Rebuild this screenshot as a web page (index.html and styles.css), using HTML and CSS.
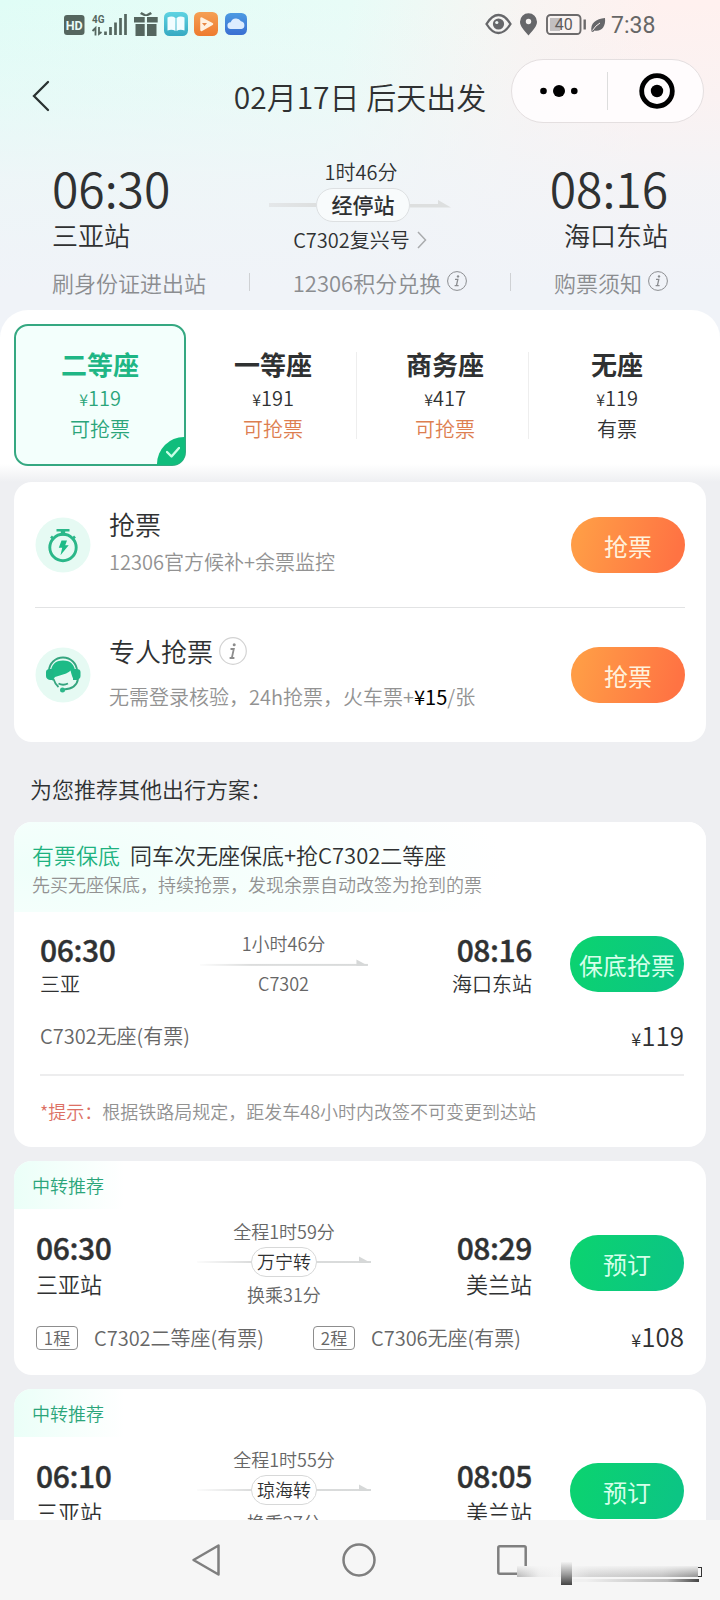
FILE: index.html
```html
<!DOCTYPE html>
<html lang="zh-CN">
<head>
<meta charset="utf-8">
<title>车次详情</title>
<link rel="stylesheet" href="styles.css">
</head>
<body>
<svg class="defs" width="0" height="0">
  <symbol id="arrow" viewBox="0 0 174 12">
    <rect x="0" y="8" width="174" height="2" fill="url(#fade)"/>
    <path d="M162 3.500l12 6.500h-12z" fill="#d6d8d8"/>
  </symbol>
  <symbol id="info" viewBox="0 0 20 20">
    <circle cx="10" cy="10" r="9.4" fill="none" stroke="currentColor" stroke-width="1"/>
    <circle cx="11" cy="5.4" r="1.2" fill="currentColor"/>
    <path d="M8 8.4h2.8L9.4 14.6h2.2M7.6 14.6h2" fill="none" stroke="currentColor" stroke-width="1.3"/>
  </symbol>
  <linearGradient id="fade" gradientUnits="userSpaceOnUse" x1="0" y1="0" x2="174" y2="0"><stop offset="0" stop-color="#dcdddd" stop-opacity="0.1"/><stop offset=".3" stop-color="#dcdddd"/><stop offset="1" stop-color="#d8dada"/></linearGradient>
</svg>
<div class="screen">
  <header class="header">
    <div class="status">
      <svg width="184" height="26" viewBox="64 11 184 26">
        <defs>
          <linearGradient id="gb" x1="0" y1="0" x2="0" y2="1"><stop offset="0" stop-color="#5fd3e2"/><stop offset="1" stop-color="#35a9c2"/></linearGradient>
          <linearGradient id="go" x1="0" y1="0" x2="0" y2="1"><stop offset="0" stop-color="#f5a055"/><stop offset="1" stop-color="#ee7a2e"/></linearGradient>
          <linearGradient id="gc" x1="0" y1="0" x2="0" y2="1"><stop offset="0" stop-color="#4d9ae2"/><stop offset="1" stop-color="#3a6fd2"/></linearGradient>
        </defs>
        <rect x="64" y="15" width="20.500" height="20" rx="3" fill="#55665f"/>
        <text x="74.200" y="29.800" class="st-hd" text-anchor="middle" textLength="17" lengthAdjust="spacingAndGlyphs">HD</text>
        <text x="92" y="22.600" class="st-4g" textLength="12.500" lengthAdjust="spacingAndGlyphs">4G</text>
        <path d="M92.500 31l3-3v7.500M101.500 32l-2.500 2v-7" fill="none" stroke="#55665f" stroke-width="1.800"/>
        <path d="M105.500 31.500v3.500M110.500 27v8M115.500 22.500v12.500M120.500 18v17M125.500 14v21" stroke="#55665f" stroke-width="2.700"/>
        <path d="M134 17h10.700v5.500H134zM147 17h10.700v5.500H147zM135.500 24h9.200v12h-9.200zM147 24h9.500v12H147zM140 14l1.500-2 4.500 2.500 4.500-2.500 1.500 2-4 2h-4z" fill="#55665f"/>
        <rect x="164" y="12" width="24" height="24" rx="5.500" fill="url(#gb)"/>
        <path d="M167.500 17.500q4.500-2 8 .5v13q-3.500-2-8-.5zM184.500 17.500q-4.500-2-8 .5v13q3.500-2 8-.5z" fill="#f2fdff"/>
        <rect x="194" y="12" width="24" height="24" rx="5.500" fill="url(#go)"/>
        <path d="M201.500 18.500l10.500 5.500-10.500 6z" fill="#fff1df" stroke="#fff1df" stroke-width="2.500" stroke-linejoin="round"/>
        <path d="M202 23h5l-2.500 3z" fill="#e88845"/>
        <rect x="225" y="13" width="22" height="22" rx="5.500" fill="url(#gc)"/>
        <path d="M231 29a3.400 3.400 0 0 1-.3-6.800 5.800 5.800 0 0 1 10.300-1 4 4 0 0 1 .5 7.800z" fill="#dcecff"/>
      </svg>
      <svg width="171" height="26" viewBox="485 11 171 26">
        <path d="M486.500 24q5.500-9 12-9t12 9q-5.500 9-12 9t-12-9z" fill="none" stroke="#66676a" stroke-width="2.300"/>
        <circle cx="498.500" cy="24" r="5.600" fill="#66676a"/><circle cx="496.800" cy="22.500" r="1.600" fill="#eef6f4"/>
        <path d="M528.500 35.500c-4.500-5.500-8.500-9-8.500-13.700a8.500 8.500 0 0 1 17 0c0 4.700-4 8.200-8.500 13.700z" fill="#66676a"/><circle cx="528.500" cy="21.500" r="2.700" fill="#f5f3f2"/>
        <rect x="547" y="15" width="33.500" height="19" rx="3.500" fill="none" stroke="#6c6a6b" stroke-width="1.900"/>
        <rect x="550" y="18" width="10" height="13" fill="#c2bfc0"/>
        <text x="563.800" y="30.300" class="st-bat" text-anchor="middle">40</text>
        <path d="M584.700 19.500v10" stroke="#6c6a6b" stroke-width="2.400"/>
        <path d="M591.500 31.500c-1.500-8 4.500-13 13.500-13.500 1 8.500-3.500 14-10.500 12.500l-1.500 1.500z" fill="#66676a"/>
        <path d="M592.500 30.500q3-5 7.500-7.500" fill="none" stroke="#fdf2f0" stroke-width="1"/>
        <text x="611" y="32.500" class="st-time">7:38</text>
      </svg>
    </div>
    <div class="nav">
      <svg class="back" width="18" height="32" viewBox="0 0 18 32"><path d="M16 2L2 16l14 14" fill="none" stroke="#2a3231" stroke-width="2.300" stroke-linecap="round"/></svg>
      <h1 class="nav-title">02月17日 后天出发</h1>
      <div class="capsule">
        <svg width="38" height="14" viewBox="0 0 38 14"><circle cx="3.500" cy="7" r="3.300"/><circle cx="19" cy="7" r="6"/><circle cx="34.300" cy="7" r="3.300"/></svg>
        <i class="capsule-line"></i>
        <svg width="36" height="36" viewBox="0 0 36 36"><circle cx="18" cy="18" r="15.300" fill="none" stroke="#000" stroke-width="4.800"/><circle cx="18" cy="18" r="6.200"/></svg>
      </div>
    </div>
    <div class="route">
      <div class="route-end"><div class="big-time">06:30</div><div class="big-stn">三亚站</div></div>
      <div class="route-mid">
        <div class="mid-text">1时46分</div>
        <div class="stops-row">
          <i class="stops-line"></i><span class="stops">经停站</span>
          <svg width="42" height="12" viewBox="0 0 42 12"><path d="M0 5h28V1l13 7.500H0z" fill="#dddfdf"/></svg>
        </div>
        <div class="mid-text train">C7302复兴号<svg width="10" height="18" viewBox="0 0 10 18"><path d="M1 1l7.500 8L1 17" fill="none" stroke="#a9abad" stroke-width="1.500"/></svg></div>
      </div>
      <div class="route-end right"><div class="big-time">08:16</div><div class="big-stn">海口东站</div></div>
    </div>
    <div class="tips">
      <span>刷身份证进出站</span><i></i>
      <span class="tip">12306积分兑换<svg width="20" height="20"><use href="#info"/></svg></span><i></i>
      <span class="tip">购票须知<svg width="20" height="20"><use href="#info"/></svg></span>
    </div>
  </header>

  <section class="seats">
    <div class="seat active"><b>二等座</b><p><small>¥</small>119</p><em>可抢票</em>
      <span class="check"><svg width="14" height="11" viewBox="0 0 14 11"><path d="M1 5l4.500 4.500L13 1" fill="none" stroke="#c9ffe6" stroke-width="2.400" stroke-linecap="round" stroke-linejoin="round"/></svg></span></div>
    <div class="seat line"><b>一等座</b><p><small>¥</small>191</p><em class="orange">可抢票</em></div>
    <div class="seat line"><b>商务座</b><p><small>¥</small>417</p><em class="orange">可抢票</em></div>
    <div class="seat"><b>无座</b><p><small>¥</small>119</p><em>有票</em></div>
  </section>

  <section class="card grab">
    <div class="grab-row">
      <svg class="grab-icon" width="56" height="56" viewBox="0 0 56 56">
        <circle cx="28" cy="28" r="27.500" fill="#e6faf3"/>
        <path d="M21.500 12h13v2.500h-4.300v4h-4.400v-4h-4.300z" fill="#2bb789"/>
        <circle cx="28" cy="30.500" r="13.200" fill="none" stroke="#2bb789" stroke-width="2.900"/>
        <path d="M16 19.500l3 3M40 19.500l-3 3" stroke="#2bb789" stroke-width="2.600"/>
        <path d="M26.500 23.500h5.500l-1.800 4.700h3.500l-8.200 10 1.700-7.400h-3.400z" fill="#1dbb86"/>
      </svg>
      <div class="grab-body"><div class="grab-title">抢票</div><div class="grab-sub">12306官方候补+余票监控</div></div>
      <button class="btn orange-btn">抢票</button>
    </div>
    <div class="grab-row second">
      <svg class="grab-icon" width="56" height="56" viewBox="0 0 56 56">
        <circle cx="28" cy="28" r="27.500" fill="#e6faf3"/>
        <path d="M14 24a14 13.500 0 0 1 28 0" fill="none" stroke="#35a57f" stroke-width="1.900"/>
        <path d="M16 26q0-12.500 12-12.500T40 26l-1.500 6q-1.500-2-3-8.500-1 2.500-15.500 6.500-1.500 2-2.500 4z" fill="#1dbb86"/>
        <path d="M11 25q0-3 4-3h3.500v11H15q-4-1-4-4zM45.500 25q0-3-4-3H38v11h3.500q4-1 4-4z" fill="#1fb685"/>
        <path d="M18.500 32q1.500 5 5 8M23.500 36.500q4.500 2.500 9.500 0M43 32q-1.500 9.500-14 10.500" fill="none" stroke="#35a57f" stroke-width="1.800"/>
        <circle cx="27.500" cy="43" r="2.500" fill="#2bb789"/>
      </svg>
      <div class="grab-body"><div class="grab-title">专人抢票<svg width="28" height="28" viewBox="0 0 28 28"><circle cx="14" cy="14" r="13.300" fill="#fff" stroke="#d3d3d3" stroke-width="1.200"/><circle cx="15.200" cy="7.800" r="1.500" fill="#8d8d8d"/><path d="M11.500 12h3.300l-2 9h2.600M10.600 21h2.600" fill="none" stroke="#8d8d8d" stroke-width="1.800"/></svg></div><div class="grab-sub">无需登录核验，24h抢票，火车票+<strong>¥15</strong>/张</div></div>
      <button class="btn orange-btn">抢票</button>
    </div>
  </section>

  <h2 class="section-title">为您推荐其他出行方案：</h2>

  <section class="card keep">
    <div class="keep-head">
      <div class="keep-title"><span>有票保底</span>同车次无座保底+抢C7302二等座</div>
      <div class="keep-sub">先买无座保底，持续抢票，发现余票自动改签为抢到的票</div>
    </div>
    <div class="trip">
      <div class="end"><div class="time">06:30</div><div class="stn">三亚</div></div>
      <div class="mid"><div>1小时46分</div><svg class="mid-arrow" width="168" height="12" viewBox="0 0 174 12"><use href="#arrow"/></svg><div>C7302</div></div>
      <div class="end right"><div class="time">08:16</div><div class="stn">海口东站</div></div>
      <button class="btn green-btn">保底抢票</button>
    </div>
    <div class="fare"><span>C7302无座(有票)</span><span class="price"><small>¥</small>119</span></div>
    <div class="notice"><span>*提示：</span>根据铁路局规定，距发车48小时内改签不可变更到达站</div>
  </section>

  <section class="card transfer">
    <div class="tag">中转推荐</div>
    <div class="trip">
      <div class="end"><div class="time">06:30</div><div class="stn">三亚站</div></div>
      <div class="mid"><div>全程1时59分</div><div class="via"><svg width="174" height="12"><use href="#arrow"/></svg><span>万宁转</span></div><div>换乘31分</div></div>
      <div class="end right"><div class="time">08:29</div><div class="stn">美兰站</div></div>
      <button class="btn green-btn">预订</button>
    </div>
    <div class="fare"><span class="legs"><i>1程</i><span class="leg-one">C7302二等座(有票)</span><i>2程</i><span>C7306无座(有票)</span></span><span class="price"><small>¥</small>108</span></div>
  </section>

  <section class="card transfer">
    <div class="tag">中转推荐</div>
    <div class="trip">
      <div class="end"><div class="time">06:10</div><div class="stn">三亚站</div></div>
      <div class="mid"><div>全程1时55分</div><div class="via"><svg width="174" height="12"><use href="#arrow"/></svg><span>琼海转</span></div><div>换乘27分</div></div>
      <div class="end right"><div class="time">08:05</div><div class="stn">美兰站</div></div>
      <button class="btn green-btn">预订</button>
    </div>
  </section>

  <footer class="sysnav">
    <svg width="30" height="34" viewBox="0 0 30 34"><path d="M27.500 2.500v29L2.500 17z" fill="none" stroke="#7f7f7f" stroke-width="2.500" stroke-linejoin="round"/></svg>
    <svg width="34" height="34" viewBox="0 0 34 34"><circle cx="17" cy="17" r="15.500" fill="none" stroke="#7f7f7f" stroke-width="2.500"/></svg>
    <svg width="30" height="30" viewBox="0 0 30 30"><rect x="1.300" y="1.300" width="27.400" height="27.400" rx="1.500" fill="none" stroke="#7f7f7f" stroke-width="2.500"/></svg>
    <div class="smudge"><i class="smudge-bar"></i><i class="smudge-block"></i><i class="smudge-under"></i><i class="smudge-end"></i></div>
  </footer>
</div>
</body>
</html>
```
FILE: styles.css
```css
* { box-sizing: border-box; margin: 0; padding: 0; }
body { width: 720px; height: 1600px; overflow: hidden; background: #eeeff2; color: #2f3132; font-family: "Noto Sans CJK SC", sans-serif; font-weight: 350; }
i, em { font-style: normal; }
svg { display: block; flex: none; }
.defs { position: absolute; }
.screen { display: flex; flex-direction: column; height: 1600px; overflow: hidden; position: relative; }
.screen > * { flex: none; }

.header { height: 338px; background: linear-gradient(180deg, rgba(241,244,248,0) 0, rgba(241,244,248,.35) 100px, rgba(241,244,248,.8) 180px, #f0f3f8 290px), linear-gradient(100deg, #e0fdf6 0, #e8fcf7 45%, #f8f4f2 68%, #fff1ef 85%, #fff1ef 100%); }
.status { display: flex; justify-content: space-between; height: 48px; padding: 11px 64px 0; }
.st-hd { font: bold 12.500px Roboto, sans-serif; fill: #eafaf6; }
.st-4g { font: bold 11px Roboto, sans-serif; fill: #55665f; }
.st-bat { font: 16px Roboto, sans-serif; fill: #5d5b5c; }
.st-time { font: 23px Roboto, sans-serif; fill: #666; }
.nav { display: grid; grid-template-columns: 177px 1fr 193px; align-items: center; height: 96px; padding: 0 16px 0 32px; }
.nav-title { font-size: 30px; line-height: 44px; font-weight: 350; text-align: center; white-space: nowrap; }
.capsule { display: flex; align-items: center; justify-content: space-between; width: 193px; height: 64px; margin-bottom: 10px; padding: 0 28px 0 28px; border: 1px solid #e4dfe0; border-radius: 32px; background: rgba(255,253,254,.9); }
.capsule-line { width: 1px; height: 38px; margin-right: 3px; background: #ddd; }
.route { display: grid; grid-template-columns: 1fr 180px 1fr; height: 122px; padding: 13px 52px 0; }
.route-end { padding-top: 5px; }
.right { text-align: right; }
.big-time { font-size: 48px; line-height: 50px; }
.big-stn { margin-top: 5px; font-size: 26px; line-height: 36px; }
.route-mid { display: flex; flex-direction: column; align-items: center; padding-top: 1px; margin-left: 2px; }
.mid-text { font-size: 20px; line-height: 28px; }
.stops-row { display: flex; align-items: center; margin: 2px 0 4px; padding-right: 1px; }
.stops-line { width: 47px; height: 4px; background: linear-gradient(90deg, #e4e7e9, #dddfdf); }
.stops { width: 94px; height: 34px; border: 1px solid #dde0e2; border-radius: 17px; background: #f8fbfc; font-size: 21px; line-height: 31px; font-weight: 500; text-align: center; }
.train { display: flex; align-items: center; gap: 7px; margin-left: -2px; white-space: nowrap; }
.tips { display: flex; align-items: center; justify-content: space-between; height: 32px; padding: 0 52px; color: #8b8d90; font-size: 22px; line-height: 30px; }
.tips i { width: 1px; height: 18px; background: #cfd1d4; }
.tip { display: flex; gap: 6px; }
.tip svg { margin-top: 4px; }

.seats { display: grid; grid-template-columns: repeat(4, 172px); height: 172px; margin-top: -28px; padding: 14px 15px 0; border-radius: 28px 28px 0 0; background: linear-gradient(180deg, #fff 154px, #eeeff2 172px); }
.seat { position: relative; height: 142px; padding-top: 21px; text-align: center; font-size: 20px; }
.seat b { display: block; font-size: 26px; line-height: 38px; font-weight: 700; }
.seat p { margin-top: 1px; line-height: 28px; }
.seat small { font-size: 16px; }
.seat em { display: block; margin-top: 2px; line-height: 28px; }
.seat .orange { color: #dd7e50; }
.seat.line::after { content: ""; position: absolute; top: 28px; right: 2px; width: 1px; height: 87px; background: #eee; }
.active { width: 172px; margin-left: -1px; padding-top: 19px; border: 2px solid #35a881; border-radius: 14px; background: #f3fffc; color: #2ba57a; }
.active b { color: #1fb685; }
.check { position: absolute; right: -1px; bottom: -1px; display: flex; align-items: center; justify-content: center; width: 28px; height: 28px; border-radius: 27px 0 12px 0; background: #10bd7c; padding: 2px 0 0 3px; }

.card { margin: 0 14px 14px; border-radius: 18px; background: #fff; overflow: hidden; }
.grab { height: 260px; padding: 0 21px; }
.grab-row { display: flex; height: 126px; border-bottom: 1px solid #e2e3e4; }
.grab-row.second { border: 0; height: 134px; }
.grab-icon { margin-top: 35px; }
.second .grab-icon { margin-top: 39px; }
.grab-body { flex: 1; margin-left: 18px; padding-top: 23px; }
.second .grab-body { padding-top: 24px; }
.grab-title { display: flex; align-items: center; gap: 6px; font-size: 26px; line-height: 38px; }
.grab-sub { margin-top: 5px; font-size: 20px; line-height: 28px; color: #929292; white-space: nowrap; }
.second .grab-sub { margin-top: 13px; }
.grab-sub strong { font-weight: 400; color: #000; }
.btn { width: 114px; height: 56px; border: 0; border-radius: 28px; font: 400 24px/54px "Noto Sans CJK SC", sans-serif; padding-top: 1px; white-space: nowrap; }
.grab .btn { margin-top: 35px; }
.grab .second .btn { margin-top: 39px; }
.orange-btn { color: #fff2dc; background: linear-gradient(105deg, #ff9c46 10%, #ff7343 90%); }
.green-btn { color: #d5ffea; background: linear-gradient(105deg, #0bd271 10%, #0cc584 90%); }

.section-title { height: 66px; padding: 16px 30px 0; font-size: 22px; line-height: 32px; font-weight: 350; }
.keep { height: 325px; }
.keep-head { height: 90px; padding: 16px 18px 0; background: radial-gradient(ellipse 460px 140px at 30px 45px, #effffa, #fff 100%); }
.keep-title { font-size: 22px; line-height: 32px; }
.keep-title span { margin-right: 10px; color: #1eb280; }
.keep-sub { margin-top: 1px; font-size: 18px; line-height: 26px; color: #929292; }
.trip { display: grid; grid-template-columns: 134px 228px 134px 152px; }
.keep .trip { grid-template-columns: 130px 228px 134px 152px; height: 105px; margin-left: 26px; padding-top: 18px; }
.time { font-size: 30px; line-height: 34px; font-weight: 500; letter-spacing: -.4px; -webkit-text-stroke: .4px #2f3132; }
.stn { font-size: 22px; line-height: 32px; margin-top: 3px; }
.keep .time { margin-top: 2px; }
.keep .stn { font-size: 20px; line-height: 28px; margin-top: 4px; }
.mid { display: flex; flex-direction: column; align-items: center; font-size: 18px; line-height: 26px; color: #666; }
.keep .mid { margin-left: -1px; }
.mid-arrow { margin: 0 0 2px 0; }
.trip .btn { justify-self: end; }
.keep .trip .btn { margin-top: 6px; }
.fare { display: flex; align-items: center; justify-content: space-between; padding-right: 22px; font-size: 20px; line-height: 38px; color: #666; }
.keep .fare { margin-left: 26px; height: 38px; }
.price { font-size: 26px; color: #2f3132; }
.price small { font-size: 18px; }
.notice { margin: 19px 22px 0 26px; padding-top: 22px; border-top: 2px solid #ededee; font-size: 18px; line-height: 26px; color: #929292; }
.notice span { color: #dc7064; }

.transfer { height: 214px; padding-left: 22px; }
.tag { width: 110px; height: 48px; margin-left: -22px; padding: 11px 0 0 18px; font-size: 18px; line-height: 26px; color: #2ba57a; background: linear-gradient(90deg, #ebfff8, #fff); }
.transfer .trip { height: 108px; padding-top: 9px; }
.transfer .time { margin-top: 12px; }
.transfer .btn { margin-top: 17px; }
.via { position: relative; display: flex; align-items: center; justify-content: center; height: 30px; margin: 3px 0 4px; }
.via svg { margin-bottom: 6px; }
.via span { position: absolute; left: 54px; width: 66px; height: 30px; border: 1px solid #d7d8d8; border-radius: 15px; background: #fff; color: #2f3132; line-height: 27px; text-align: center; }
.transfer .mid { width: 174px; margin-left: 27px; }
.legs { display: flex; align-items: center; white-space: nowrap; }
.legs i { width: 42px; height: 24px; margin-right: 16px; border: 1px solid #8d8d8d; border-radius: 4px; font-size: 17px; line-height: 21px; text-align: center; }
.leg-one { width: 219px; }

.sysnav { position: absolute; left: 0; right: 0; bottom: 0; display: flex; align-items: center; justify-content: space-between; height: 80px; padding: 0 193px 0 191px; background: #f6f6f6; }
.smudge { position: absolute; left: 517px; top: 40px; width: 186px; height: 26px; }
.smudge i { position: absolute; }
.smudge-bar { left: 0; top: 6px; width: 181px; height: 11px; background: linear-gradient(180deg, rgba(246,246,246,.9), rgba(246,246,246,0) 90%), linear-gradient(90deg, #bbb, #ececec 12%, #f3f3f3 22%, #d6d6d6 40%, #c4c4c4 80%, #999); }
.smudge-block { left: 44px; top: 2px; width: 11px; height: 23px; background: linear-gradient(180deg, #f2f2f2, #999 55%, #444); }
.smudge-under { left: 56px; top: 19px; width: 126px; height: 3px; background: linear-gradient(90deg, #f0f0f0 10%, #bbb 75%, #444); }
.smudge-end { right: 1px; top: 7px; width: 4px; height: 10px; border: 1px solid #333; border-width: 1px 1px 1px 0; }
```
